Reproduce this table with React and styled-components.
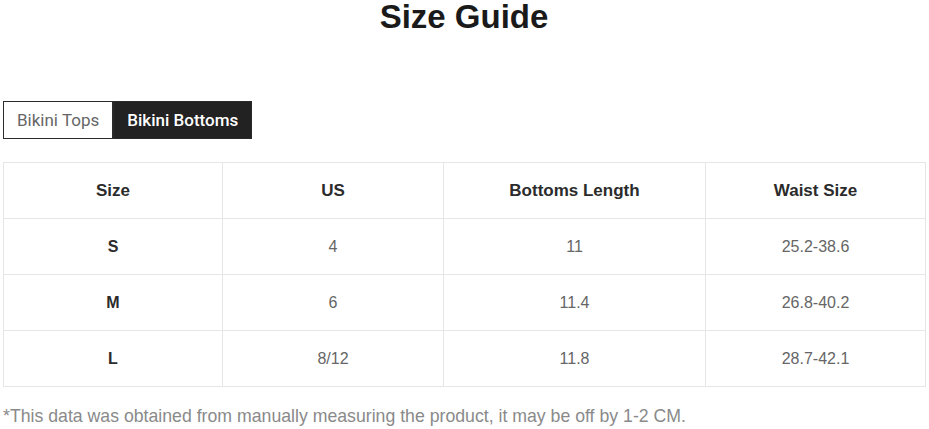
import React, { useState } from "react";
import styled, { createGlobalStyle } from "styled-components";

const GlobalStyle = createGlobalStyle`
  html, body {
    margin: 0;
    padding: 0;
    background: #fff;
    font-family: "Liberation Sans", Arial, sans-serif;
  }
`;

const rows = [
  { size: "S", us: "4", length: "11", waist: "25.2-38.6" },
  { size: "M", us: "6", length: "11.4", waist: "26.8-40.2" },
  { size: "L", us: "8/12", length: "11.8", waist: "28.7-42.1" },
];

export default function App() {
  const [tab, setTab] = useState("bottoms");

  return (
    <>
      <GlobalStyle />
      <Page>
        <Title>Size Guide</Title>
        <Tabs>
          <Tab active={tab === "tops"} onClick={() => setTab("tops")}>
            Bikini Tops
          </Tab>
          <Tab active={tab === "bottoms"} onClick={() => setTab("bottoms")}>
            Bikini Bottoms
          </Tab>
        </Tabs>
        <Table>
          <colgroup>
            <col style={{ width: 219 }} />
            <col style={{ width: 221 }} />
            <col style={{ width: 262 }} />
            <col style={{ width: 220 }} />
          </colgroup>
          <thead>
            <tr>
              <Th>Size</Th>
              <Th>US</Th>
              <Th>Bottoms Length</Th>
              <Th>Waist Size</Th>
            </tr>
          </thead>
          <tbody>
            {rows.map((row) => (
              <tr key={row.size}>
                <Td bold>{row.size}</Td>
                <Td>{row.us}</Td>
                <Td>{row.length}</Td>
                <Td>{row.waist}</Td>
              </tr>
            ))}
          </tbody>
        </Table>
        <Note>
          *This data was obtained from manually measuring the product, it may be
          off by 1-2 CM.
        </Note>
      </Page>
    </>
  );
}

const Page = styled.div`
  padding: 0 4px 0 3px;
`;

const Title = styled.h1`
  margin: 0;
  padding-top: 2px;
  text-align: center;
  font-size: 33px;
  line-height: 30px;
  font-weight: 700;
  color: #1a1a1a;
`;

const Tabs = styled.div`
  display: flex;
  margin-top: 69px;
`;

const Tab = styled.button`
  height: 38px;
  padding: 0 13px;
  border: 1px solid #2a2a2a;
  background: ${(p) => (p.active ? "#222" : "#fff")};
  color: ${(p) => (p.active ? "#fff" : "#666")};
  font-family: Roboto, "Liberation Sans", sans-serif;
  font-size: 17px;
  font-weight: ${(p) => (p.active ? 500 : 400)};
  cursor: pointer;
`;

const Table = styled.table`
  margin-top: 23px;
  width: 922px;
  border-collapse: collapse;
  table-layout: fixed;
`;

const Th = styled.th`
  height: 55px;
  padding: 0;
  border: 1px solid #e6e6e6;
  text-align: center;
  font-size: 17px;
  font-weight: 700;
  color: #2b2b2b;
`;

const Td = styled.td`
  height: 55px;
  padding: 0;
  border: 1px solid #e6e6e6;
  text-align: center;
  font-size: 16px;
  font-weight: ${(p) => (p.bold ? 700 : 400)};
  color: ${(p) => (p.bold ? "#2b2b2b" : "#666")};
`;

const Note = styled.p`
  margin: 19px 0 0;
  font-size: 17.7px;
  color: #8a8a8a;
`;
